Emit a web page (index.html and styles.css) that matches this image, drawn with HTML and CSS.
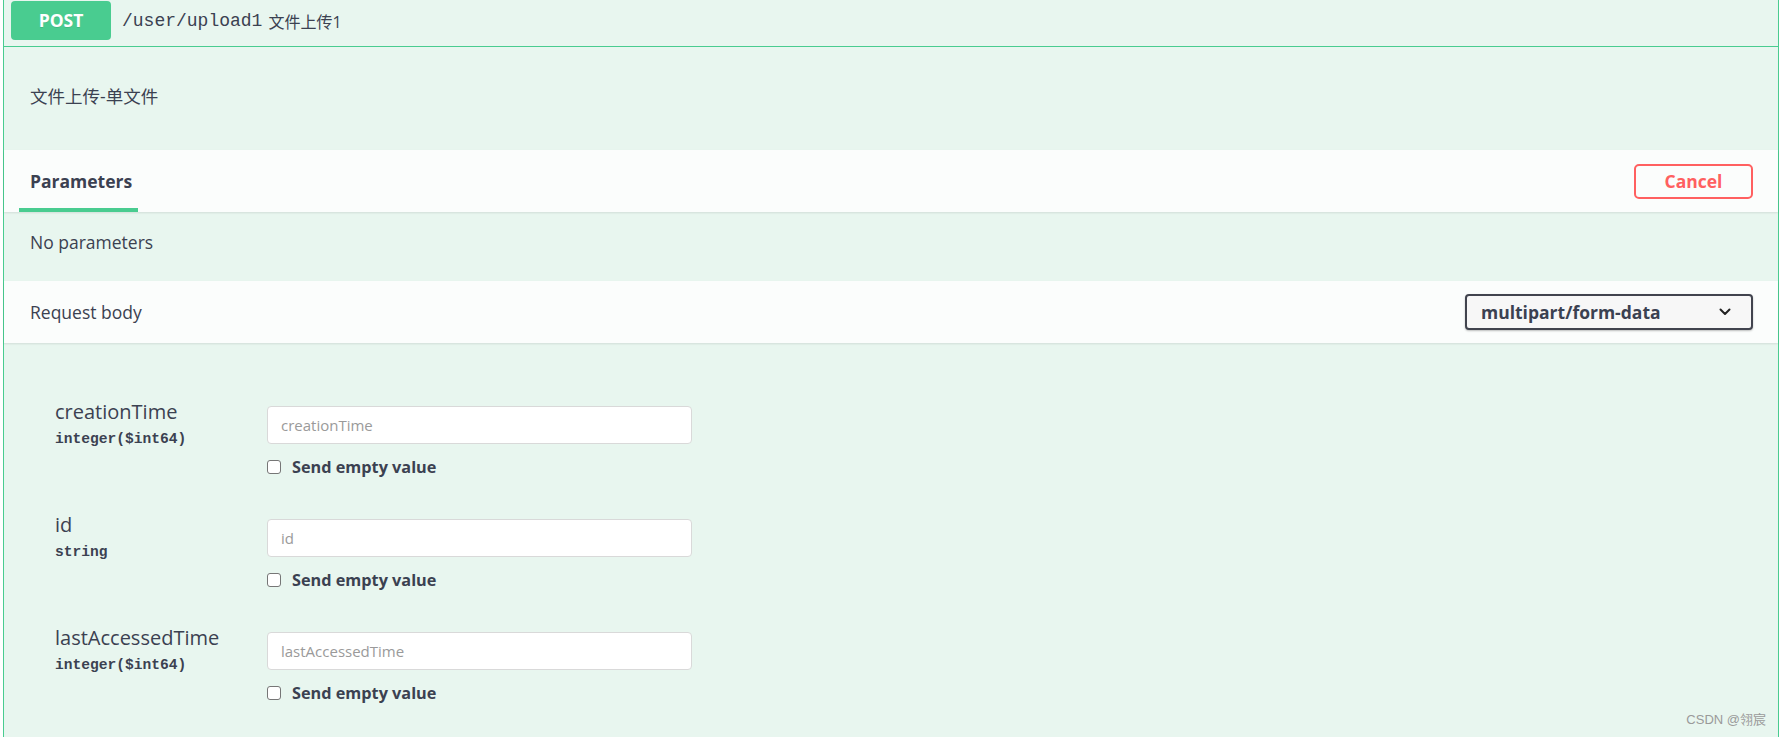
FILE: index.html
```html
<!DOCTYPE html>
<html lang="en">
<head>
    <meta charset="UTF-8">
    <meta name="viewport" content="width=device-width, initial-scale=1.0">
    <title>Swagger - /user/upload1</title>
    <link rel="stylesheet" href="styles.css">
</head>
<body>
    <div class="wrapper">
        <div class="opblock">
            <!-- Summary row -->
            <div class="summary">
                <span class="method">POST</span>
                <span class="path">/user/upload1</span>
                <span class="summary-desc">文件上传1</span>
            </div>

            <div class="description">文件上传-单文件</div>

            <!-- Parameters -->
            <div class="section-header">
                <div class="tab active">Parameters</div>
                <button type="button" class="btn-cancel">Cancel</button>
            </div>
            <div class="no-params">No parameters</div>

            <!-- Request body -->
            <div class="section-header">
                <div class="section-title">Request body</div>
                <div class="content-type">
                    <span>multipart/form-data</span>
                    <svg width="12" height="8" viewBox="0 0 12 8">
                        <path d="M1.5 1.5 L6 6 L10.5 1.5" fill="none" stroke="#222" stroke-width="2" stroke-linecap="round" stroke-linejoin="round"/>
                    </svg>
                </div>
            </div>

            <div class="body-params">
                <div class="param-row">
                    <div class="param-name">
                        <div class="name">creationTime</div>
                        <div class="type">integer($int64)</div>
                    </div>
                    <div class="param-value">
                        <input type="text" placeholder="creationTime">
                        <label class="empty-toggle"><input type="checkbox"> Send empty value</label>
                    </div>
                </div>

                <div class="param-row">
                    <div class="param-name">
                        <div class="name">id</div>
                        <div class="type">string</div>
                    </div>
                    <div class="param-value">
                        <input type="text" placeholder="id">
                        <label class="empty-toggle"><input type="checkbox"> Send empty value</label>
                    </div>
                </div>

                <div class="param-row">
                    <div class="param-name">
                        <div class="name">lastAccessedTime</div>
                        <div class="type">integer($int64)</div>
                    </div>
                    <div class="param-value">
                        <input type="text" placeholder="lastAccessedTime">
                        <label class="empty-toggle"><input type="checkbox"> Send empty value</label>
                    </div>
                </div>
            </div>
        </div>
    </div>

    <div class="watermark">CSDN @翎宸</div>
</body>
</html>
```

FILE: styles.css
```css
body {
    margin: 0;
    font-family: "Open Sans", "Noto Sans CJK SC", sans-serif;
    color: #3b4151;
    background-color: #fff;
}
.wrapper {
    padding: 0 3px;
    height: 737px;
    overflow: hidden;
}
.opblock {
    border-left: 1px solid #49cc90;
    border-right: 1px solid #49cc90;
    background-color: #e8f6ef;
    min-height: 737px;
}
.summary {
    display: flex;
    align-items: center;
    padding: 1px 6px 6px 7px;
    border-bottom: 1px solid #49cc90;
}
.method {
    width: 100px;
    height: 39px;
    line-height: 39px;
    text-align: center;
    background-color: #49cc90;
    color: #fff;
    font-weight: 700;
    font-size: 17.5px;
    border-radius: 4px;
    text-shadow: 0 1px 0 rgba(0,0,0,0.1);
}
.path {
    margin-left: 11px;
    font-family: "Liberation Mono", "Noto Sans CJK SC", monospace;
    font-size: 18px;
}
.summary-desc {
    margin-left: 6px;
    font-size: 16px;
}
.description {
    height: 103px;
    box-sizing: border-box;
    padding: 37px 26px 0;
    font-size: 17.5px;
    line-height: 25px;
}
.section-header {
    display: flex;
    align-items: center;
    justify-content: space-between;
    height: 62px;
    padding: 0 25px 0 0;
    background-color: rgba(255,255,255,0.8);
    box-shadow: 0 1px 2px rgba(0,0,0,0.1);
    position: relative;
}
.tab {
    height: 62px;
    box-sizing: border-box;
    margin-left: 15px;
    padding: 0 8px 0 11px;
    display: flex;
    align-items: center;
    font-size: 17.5px;
    font-weight: 700;
    width: 119px;
}
.tab.active {
    border-bottom: 4px solid #49cc90;
    padding-top: 4px;
}
.btn-cancel {
    width: 119px;
    height: 35px;
    border: 2px solid #ff6060;
    border-radius: 5px;
    background: transparent;
    color: #ff6060;
    font-family: "Open Sans", sans-serif;
    font-size: 17.5px;
    font-weight: 700;
    padding: 0;
}
.no-params {
    height: 69px;
    box-sizing: border-box;
    padding: 18px 26px 0;
    font-size: 17.5px;
    line-height: 25px;
}
.section-title {
    margin-left: 26px;
    font-size: 17.5px;
}
.content-type {
    width: 288px;
    height: 36px;
    box-sizing: border-box;
    display: flex;
    align-items: center;
    justify-content: space-between;
    padding: 0 20px 0 14px;
    border: 2px solid #41444e;
    border-radius: 4px;
    background-color: #f7f7f7;
    box-shadow: 0 1px 2px rgba(0,0,0,0.25);
    font-size: 17.5px;
    font-weight: 700;
}
.body-params {
    padding: 56px 0 30px 51px;
    display: flex;
    flex-direction: column;
    gap: 34px;
}
.param-row {
    display: flex;
    align-items: flex-start;
}
.param-name {
    width: 212px;
}
.name {
    font-size: 20px;
    line-height: 26px;
}
.type {
    margin-top: 4px;
    font-family: "Liberation Mono", monospace;
    font-size: 14.6px;
    font-weight: 700;
    line-height: 20px;
}
.param-value {
    display: flex;
    flex-direction: column;
    align-items: flex-start;
}
.param-value input[type="text"] {
    margin-top: 7px;
    width: 425px;
    height: 38px;
    box-sizing: border-box;
    padding: 0 13px;
    border: 1px solid #d9d9d9;
    border-radius: 4px;
    background: #fff;
    font-family: "Open Sans", sans-serif;
    font-size: 15px;
    color: #3b4151;
}
.param-value input::placeholder {
    color: #9a9a9a;
}
.empty-toggle {
    margin-top: 12px;
    display: flex;
    align-items: center;
    gap: 11px;
    font-size: 16.25px;
    font-weight: 700;
    line-height: 22px;
}
.empty-toggle input {
    appearance: none;
    margin: 0;
    width: 14px;
    height: 14px;
    border: 1px solid #767676;
    border-radius: 3px;
    background: #fff;
}
.watermark {
    position: absolute;
    right: 16px;
    bottom: 9px;
    font-size: 13px;
    color: #9a9a9a;
    font-family: "Liberation Sans", "Noto Sans CJK SC", sans-serif;
}
```
